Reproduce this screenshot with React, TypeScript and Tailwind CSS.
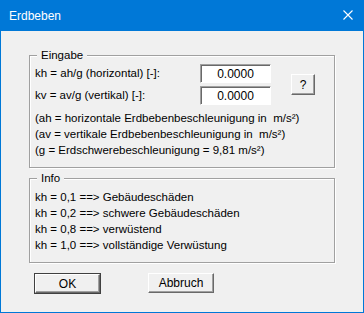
const font = { fontFamily: '"Liberation Sans", Arial, sans-serif' }

const eingabe = [
  { label: "kh = ah/g (horizontal) [-]:", value: "0.0000" },
  { label: "kv = av/g (vertikal) [-]:", value: "0.0000" },
]

const notes = [
  "(ah = horizontale Erdbebenbeschleunigung in  m/s²)",
  "(av = vertikale Erdbebenbeschleunigung in  m/s²)",
  "(g = Erdschwerebeschleunigung = 9,81 m/s²)",
]

const info = [
  "kh = 0,1 ==> Gebäudeschäden",
  "kh = 0,2 ==> schwere Gebäudeschäden",
  "kh = 0,8 ==> verwüstend",
  "kh = 1,0 ==> vollständige Verwüstung",
]

function Group({ title, className, children }: { title: string; className?: string; children: React.ReactNode }) {
  return (
    <fieldset
      className={`mx-[28px] border border-[#a0a0a0] pl-[5px] shadow-[inset_1px_1px_0_#fff,1px_1px_0_#fff] ${className ?? ""}`}
    >
      <legend className="ml-[2px] bg-[#f0f0f0] px-[4px] leading-[13px]">{title}</legend>
      {children}
    </fieldset>
  )
}

function Button({ label, isDefault, className }: { label: string; isDefault?: boolean; className?: string }) {
  return (
    <div className={`${isDefault ? "border border-[#404040]" : ""} ${className ?? ""}`}>
      <div className="flex h-full items-center justify-center border border-t-white border-l-white border-r-[#696969] border-b-[#696969] bg-[#f0f0f0] shadow-[inset_-1px_-1px_0_#a0a0a0] text-[12px] text-black">
        {label}
      </div>
    </div>
  )
}

export default function App() {
  return (
    <div className="flex h-[313px] w-[364px] flex-col border-x border-b border-[#0078d7] bg-[#f0f0f0] text-[11.5px] text-black" style={font}>
      <div className="-mx-px flex h-[31px] shrink-0 items-center justify-between bg-[#0078d7] pl-[9px] pr-[11px] text-white">
        <span className="text-[12px]">Erdbeben</span>
        <svg width="10" height="10" viewBox="0 0 10 10" className="mb-px">
          <path d="M0.5 0.5L9.5 9.5M9.5 0.5L0.5 9.5" stroke="white" strokeWidth="1.1" />
        </svg>
      </div>

      <Group title="Eingabe" className="mt-[18px] pb-[9px]">
        <div className="mt-[2px] flex items-center">
          <div className="flex flex-col gap-[3px]">
            {eingabe.map((row) => (
              <div key={row.label} className="flex items-center">
                <span className="w-[165px]">{row.label}</span>
                <div className="flex h-[19px] w-[71px] items-center justify-center border border-t-[#a0a0a0] border-l-[#a0a0a0] border-r-white border-b-white bg-white text-[12px] shadow-[inset_1px_1px_0_#696969]">
                  {row.value}
                </div>
              </div>
            ))}
          </div>
          <Button label="?" className="ml-[20px] h-[21px] w-[24px]" />
        </div>
        <div className="mt-[5px] flex flex-col">
          {notes.map((n) => (
            <span key={n} className="whitespace-pre leading-[16px]">{n}</span>
          ))}
        </div>
      </Group>

      <Group title="Info" className="mt-[4px] pb-[9px]">
        <div className="mt-[4px] flex flex-col">
          {info.map((n) => (
            <span key={n} className="leading-[16px]">{n}</span>
          ))}
        </div>
      </Group>

      <div className="mt-[10px] flex gap-[47px] pl-[33px]">
        <Button label="OK" isDefault className="h-[21px] w-[67px]" />
        <Button label="Abbruch" className="h-[20px] w-[66px]" />
      </div>
    </div>
  )
}
